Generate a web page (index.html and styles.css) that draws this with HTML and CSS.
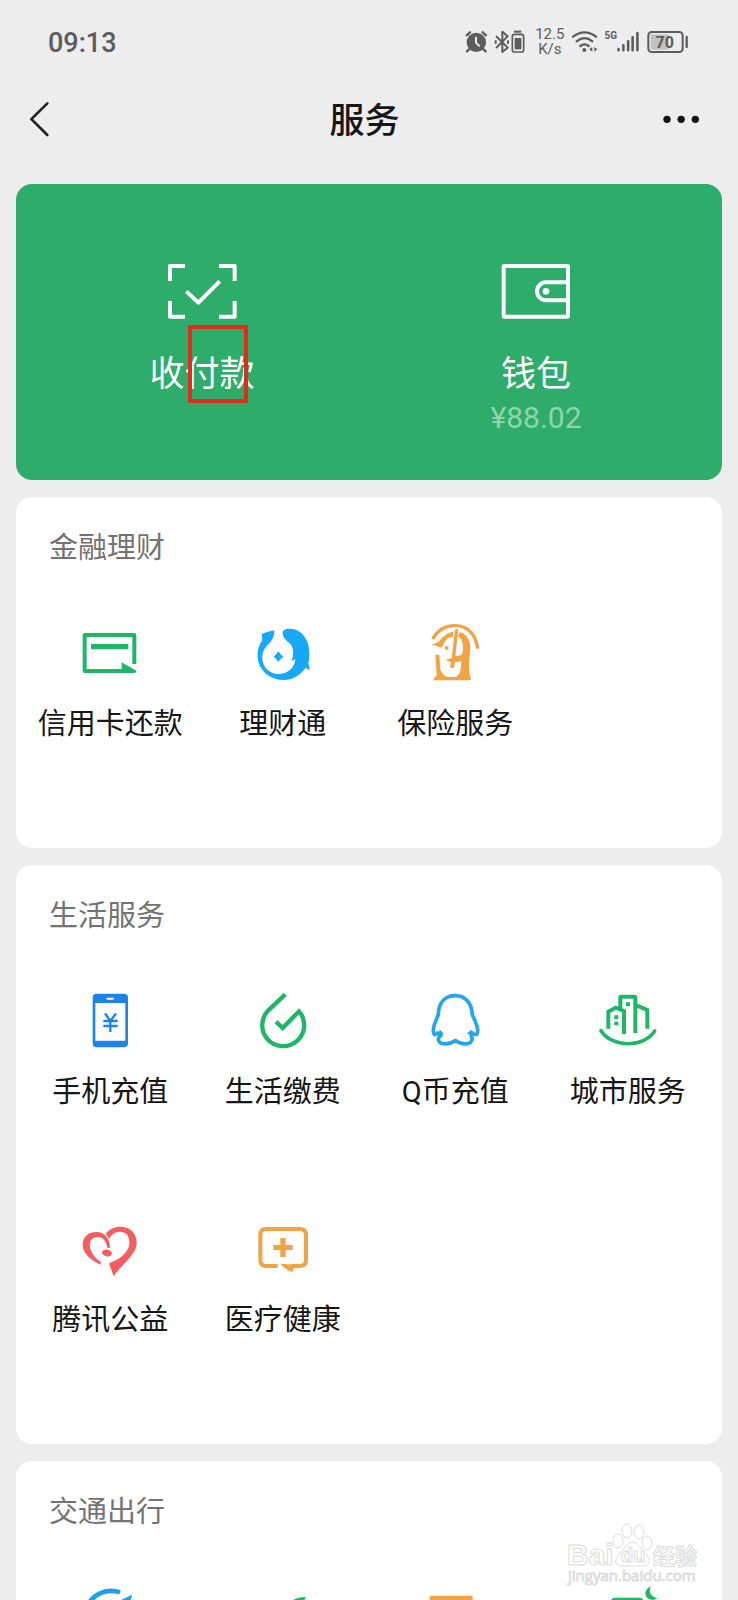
FILE: index.html
```html
<!DOCTYPE html>
<html lang="zh-CN">
<head>
<meta charset="utf-8">
<meta name="viewport" content="width=device-width, initial-scale=1">
<title>服务</title>
<link rel="stylesheet" href="styles.css">
</head>
<body>
<div class="screen">
  <div class="status">
    <time class="clock">09:13</time>
    <div class="indicators">
      <svg class="alarm" viewBox="76 60 69 72" aria-hidden="true">
        <path d="M81 76l10-9M139 76l-10-9M88 118l-6 6M132 118l6 6" stroke="#5c5c5c" stroke-width="7" fill="none" stroke-linecap="round"/>
        <circle cx="110" cy="97" r="29" fill="#5c5c5c"/>
        <path d="M109 80v18l11 11" stroke="#ededed" stroke-width="6" fill="none"/>
      </svg>
      <svg class="bluetooth" viewBox="165 60 42 72" aria-hidden="true">
        <path d="M168 78l35 35-16 13V65l16 14-35 35M167 91v10M204 91v10" fill="none" stroke="#5c5c5c" stroke-width="6" stroke-linejoin="round"/>
      </svg>
      <svg class="device" viewBox="214 60 42 72" aria-hidden="true">
        <path d="M223 65h22" stroke="#5c5c5c" stroke-width="6"/>
        <rect x="218" y="73" width="34" height="53" rx="7" fill="none" stroke="#5c5c5c" stroke-width="5"/>
        <rect x="225" y="84" width="20" height="34" fill="#5c5c5c"/>
      </svg>
      <span class="speed">12.5<br>K/s</span>
      <svg class="wifi" viewBox="402 60 78 72" aria-hidden="true">
        <path d="M405 80q35-26 69 0M416 94q24-19 47 0M427 108q13-10 25 0" fill="none" stroke="#5c5c5c" stroke-width="7" stroke-linecap="round"/>
        <circle cx="439" cy="120" r="6" fill="#5c5c5c"/>
        <path d="M463 111v14l-9-7zM469 111v14l9-7z" fill="#5c5c5c"/>
      </svg>
      <span class="network">5G</span>
      <svg class="signal" viewBox="530 60 69 72" aria-hidden="true">
        <path d="M535 118v4M550 106v16M565 94v28M579 81v41M594 68v54" stroke="#5c5c5c" stroke-width="8" stroke-linecap="round"/>
      </svg>
      <svg class="battery" viewBox="622 60 126 72" aria-hidden="true">
        <rect x="633" y="73" width="54" height="46" fill="#c2c2c2"/>
        <rect x="626" y="66" width="103" height="60" rx="10" fill="none" stroke="#5c5c5c" stroke-width="6"/>
        <path d="M741 81v30" stroke="#5c5c5c" stroke-width="7" stroke-linecap="round"/>
        <text x="675" y="113" text-anchor="middle" class="charge">70</text>
      </svg>
    </div>
  </div>

  <header class="nav">
    <button class="nav-button" type="button" aria-label="返回">
      <svg class="back" viewBox="88 272 63 114"><path d="M143 279L95 326.500L143 374" fill="none" stroke="#222" stroke-width="8" stroke-linecap="round" stroke-linejoin="round"/></svg>
    </button>
    <h1 class="nav-title">服务</h1>
    <button class="nav-button nav-more" type="button" aria-label="更多">
      <svg class="more" viewBox="668 313 111 33"><g fill="#111"><circle cx="680" cy="326" r="11"/><circle cx="722.500" cy="326" r="11"/><circle cx="765" cy="326" r="11"/></g></svg>
    </button>
  </header>

  <main class="content">
    <section class="pay">
      <a class="pay-item" href="#pay">
        <svg class="pay-icon" viewBox="108 66 216 180" fill="none" stroke="#fff" stroke-width="12" stroke-linejoin="round" aria-hidden="true">
          <path d="M120 123V78h45M267 78h47v45M314 183v47h-47M165 230h-45v-47M169 154l36 34 64-64"/>
        </svg>
        <span class="pay-label">收付款<span class="marker"></span></span>
      </a>
      <a class="pay-item" href="#wallet">
        <svg class="pay-icon" viewBox="1110 66 216 180" fill="none" stroke="#fff" stroke-width="12" stroke-linejoin="round" aria-hidden="true">
          <rect x="1121" y="78" width="193" height="152" rx="2"/>
          <path d="M1314 127h-66a27 27 0 0 0 0 54h66"/>
          <circle cx="1248" cy="154" r="10" fill="#fff" stroke="none"/>
        </svg>
        <span class="pay-label">钱包</span>
        <span class="amount">¥88.02</span>
      </a>
    </section>

    <section class="card">
      <h2 class="card-title">金融理财</h2>
      <div class="grid">
        <a class="item" href="#credit">
          <svg class="icon" viewBox="60 72 180 180" aria-hidden="true">
            <path d="M223 192V106q0-1-1-1H75q-1 0-1 1v106q0 1 1 1h115" fill="none" stroke="#1fb668" stroke-width="12"/>
            <path d="M93 132h112v16H93zM185 187l44 25q0 7-7 7h-37z" fill="#1fb668"/>
          </svg>
          <span class="label">信用卡还款</span>
        </a>
        <a class="item" href="#licaitong">
          <svg class="icon" viewBox="578 72 180 180" fill="#17a8f8" aria-hidden="true">
            <path d="M642 91Q622 94 604 102Q604 112 606 120C592 139 588 166 595 188C604 219 635 239 670 240C696 240 718 228 735 204L749 210L744 190C750 165 748 135 735 114C725 96 708 86 686 86C671 86 666 93 667 101C668 113 680 123 690 132C699 142 699 156 698 166Q696 177 694 183L705 178C703 203 683 221 657 222C628 223 607 203 606 175C605 157 613 144 624 133C636 121 642 109 642 91Z"/>
            <path d="M654 154q6 9 15 16-9 6-15 15-6-9-14-15 8-7 14-16z"/>
          </svg>
          <span class="label">理财通</span>
        </a>
        <a class="item" href="#insurance">
          <svg class="icon" viewBox="1096 72 180 180" aria-hidden="true">
            <path d="M1119 117C1134 90 1159 76 1187 77C1224 77 1249 103 1254 146" fill="none" stroke="#f2a344" stroke-width="10"/>
            <path d="M1116 134Q1136 128 1142 119Q1156 102 1182 94L1179 111C1164 111 1156 120 1153 132L1145 143Q1132 137 1116 134Z" fill="#f2a344"/>
            <path d="M1202 96C1224 103 1236 127 1231 158C1227 188 1226 211 1234 236Q1234 241 1228 241H1120L1131 225L1127 164H1139L1142 208Q1149 227 1163 231H1188Q1201 226 1203 205L1205 184L1186 187L1183 203H1171L1174 186L1158 181L1176 174L1186 88L1196 88L1187 168Q1201 169 1208 161Q1213 138 1206 121Q1202 112 1194 108Z" fill="#f2a344"/>
            <circle cx="1161" cy="144" r="6" fill="#f2a344"/>
          </svg>
          <span class="label">保险服务</span>
        </a>
      </div>
    </section>

    <section class="card">
      <h2 class="card-title">生活服务</h2>
      <div class="grid">
        <a class="item" href="#topup">
          <svg class="icon" viewBox="61 66 180 180" aria-hidden="true">
            <path fill-rule="evenodd" d="M111 71h82q12 0 12 12v137q0 12-12 12h-82q-12 0-12-12V83q0-12 12-12zm-4 28v113h90V99zM141 83v6h21v-6z" fill="#1e82e6"/>
            <path d="M136 130l16 23 17-23M131 153h43M131 168h43M152 153v33" fill="none" stroke="#1e82e6" stroke-width="7"/>
          </svg>
          <span class="label">手机充值</span>
        </a>
        <a class="item" href="#bills">
          <svg class="icon" viewBox="578 66 180 180" aria-hidden="true">
            <path d="M675 73L624 121A63 63 0 1 0 716 124L667 174L647 155" fill="none" stroke="#1fb668" stroke-width="13"/>
          </svg>
          <span class="label">生活缴费</span>
        </a>
        <a class="item" href="#qcoin">
          <svg class="icon" viewBox="75 66 180 180" aria-hidden="true">
            <path d="M113 189Q99 202 100 179C101 163 110 147 115 134C116 99 134 77 166 77C198 77 215 101 217 134C222 147 232 164 233 181Q232 202 218 189Q210 196 217 205C215 227 184 225 166 211C148 225 117 226 115 208Q115 201 123 196Q116 191 113 189Z" fill="none" stroke="#23a5ef" stroke-width="11" stroke-linejoin="round"/>
            <path d="M119 178l12 13-15 5zM214 178l-13 13 16 5z" fill="#23a5ef"/>
          </svg>
          <span class="label">Q币充值</span>
        </a>
        <a class="item" href="#city">
          <svg class="icon" viewBox="593 66 180 180" aria-hidden="true">
            <path d="M624 176V125L646 113L671 123V192M660 115V83q0-3 3-3h39q3 0 3 3V189M710 107L741 120V176" fill="none" stroke="#1fb668" stroke-width="12"/>
            <path d="M677 97h12v12h-12zM642 136h12v11h-12zM642 155h12v11h-12z" fill="#1fb668"/>
            <path d="M602 182C635 234 730 234 763 183" fill="none" stroke="#1fb668" stroke-width="11" stroke-linecap="round"/>
          </svg>
          <span class="label">城市服务</span>
        </a>
        <a class="item" href="#charity">
          <svg class="icon" viewBox="121 60 180 180" fill="#f55d60" aria-hidden="true">
            <path d="M183 194C152 181 128 159 129 133C130 109 147 96 170 96C195 96 211 114 211 144L203 143C199 121 188 110 174 111C158 112 149 122 151 140C153 157 166 174 183 185Z"/>
            <path d="M198 101C210 87 224 80 241 80C273 80 292 101 291 131C289 165 247 191 222 229L208 190C236 180 266 160 269 133C271 108 259 95 241 95C225 95 213 105 208 118Q205 106 198 101Z"/>
            <ellipse cx="202" cy="159" rx="15" ry="10" transform="rotate(10 202 159)"/>
          </svg>
          <span class="label">腾讯公益</span>
        </a>
        <a class="item" href="#health">
          <svg class="icon" viewBox="638 60 180 180" aria-hidden="true">
            <path d="M712 198H678Q660 198 660 180V105Q660 87 678 87H779Q797 87 797 105V180Q797 198 779 198H752" fill="none" stroke="#f2a344" stroke-width="12"/>
            <path d="M719 191l46 3-9 22q-21-7-37-25zM720 114h16v21h21v15h-21v21h-16v-21h-21v-15h21z" fill="#f2a344"/>
          </svg>
          <span class="label">医疗健康</span>
        </a>
      </div>
    </section>

    <section class="card">
      <h2 class="card-title">交通出行</h2>
      <div class="grid">
        <a class="item" href="#travel">
          <svg class="icon" viewBox="241 444 180 180" aria-hidden="true">
            <path d="M361 457C320 444 279 462 262 500A77 77 0 0 0 400 560" fill="none" stroke="#1e9fe8" stroke-width="14"/>
            <path d="M398 464L368 478L310 540L380 520Z" fill="#1e9fe8"/>
          </svg>
        </a>
        <a class="item" href="#train">
          <svg class="icon" viewBox="758 444 180 180" aria-hidden="true">
            <path d="M916 471Q880 471 868 492L848 479L843 483Q862 500 862 530Q900 515 916 471Z" fill="#1fb668"/>
          </svg>
        </a>
        <a class="item" href="#taxi">
          <svg class="icon" viewBox="136 444 180 180" aria-hidden="true">
            <path d="M155 467h119q5 0 5 5v130H150V472q0-5 5-5z" fill="#f2a344"/>
          </svg>
        </a>
        <a class="item" href="#hotel">
          <svg class="icon" viewBox="653 444 180 180" fill="#1fb668" aria-hidden="true">
            <path d="M704 473h74q12 0 12 12v110h-98V485q0-12 12-12z"/>
            <path d="M812 439C803 455 811 470 831 475C814 486 795 476 795 459Q797 445 812 439Z"/>
          </svg>
        </a>
      </div>
    </section>
  </main>

  <div class="watermark">
    <svg class="watermark-art" viewBox="0 0 140 66" role="img" aria-label="Baidu 经验">
      <g fill="#fff" stroke="#dcdcdc" stroke-width="1">
        <ellipse cx="53" cy="23" rx="5" ry="7"/>
        <ellipse cx="62" cy="13" rx="5" ry="7"/>
        <ellipse cx="74" cy="14" rx="5" ry="7"/>
        <ellipse cx="82" cy="25" rx="5" ry="7"/>
        <path d="M51 41Q53 36 58 32Q67 16 77 32L82 37Q88 47 79 48H57Q49 47 51 41Z"/>
        <text class="mark-bai" x="2" y="47">Bai</text>
        <text class="mark-du" x="56" y="44">du</text>
        <text class="mark-cn" x="88" y="46">经验</text>
        <text class="mark-url" x="3" y="63">jingyan.baidu.com</text>
      </g>
    </svg>
  </div>
</div>
</body>
</html>
```
FILE: styles.css
```css
* {
  box-sizing: border-box;
}

body {
  margin: 0;
  background: #ededed;
  color: #161616;
  font-family: Roboto, "Noto Sans CJK SC", sans-serif;
}

a {
  color: inherit;
  text-decoration: none;
}

svg {
  display: block;
  overflow: visible;
  flex: none;
}

.screen {
  position: relative;
  height: 100vh;
  overflow: hidden;
}

.status {
  display: flex;
  align-items: center;
  justify-content: space-between;
  height: 84px;
  padding: 0 49px 0 48px;
  color: #5c5c5c;
}

.clock {
  padding-top: 2px;
  font-size: 27px;
  font-weight: 500;
}

.indicators {
  display: flex;
  align-items: center;
}

.indicators svg {
  height: 24px;
}

.alarm {
  width: 23px;
  margin-right: 7px;
}

.bluetooth {
  width: 14px;
  margin-right: 2px;
}

.device {
  width: 14px;
  margin-right: 10px;
}

.speed {
  margin-right: 8px;
  font-size: 15px;
  line-height: 15px;
  text-align: center;
}

.wifi {
  width: 26px;
  margin-right: 6px;
}

.network {
  align-self: flex-start;
  padding-top: 3px;
  font-size: 10px;
  font-weight: 700;
  line-height: 12px;
}

.signal {
  width: 22px;
  margin-right: 8px;
}

.battery {
  width: 42px;
}

.charge {
  fill: #5c5c5c;
  font-size: 48px;
  font-weight: 700;
}

.nav {
  display: grid;
  grid-template-columns: 1fr auto 1fr;
  align-items: center;
  height: 72px;
  padding: 0 38px 0 29px;
}

.nav-button {
  display: flex;
  justify-self: start;
  padding: 0;
  border: 0;
  background: none;
}

.nav-more {
  justify-self: end;
}

.back {
  width: 21px;
  height: 38px;
}

.more {
  width: 37px;
  height: 11px;
}

.nav-title {
  margin: 0;
  padding-top: 4px;
  font-size: 35px;
  font-weight: 500;
  line-height: 48px;
}

.content {
  display: flex;
  flex-direction: column;
  gap: 17px;
  padding: 28px 16px 0;
}

.pay {
  display: grid;
  grid-template-columns: 1fr 1fr;
  padding: 78px 19px 44px;
  border-radius: 16px;
  background: #2eac69;
  color: #fff;
}

.pay-item {
  display: flex;
  flex-direction: column;
  align-items: center;
}

.pay-icon {
  width: 72px;
  height: 60px;
  margin-bottom: 31px;
}

.pay-label {
  position: relative;
  margin-bottom: 3px;
  font-size: 35px;
  line-height: 44px;
}

.marker {
  position: absolute;
  top: -28px;
  right: 7px;
  width: 60px;
  height: 78px;
  border: 4px solid #e5291a;
  border-radius: 2px;
}

.amount {
  color: #8fd5ae;
  font-size: 30px;
  line-height: 36px;
}

.card {
  padding: 31px 8px 0;
  border-radius: 16px;
  background: #fff;
}

.card-title {
  margin: 0 0 52px;
  padding-left: 25px;
  color: #737373;
  font-size: 29px;
  font-weight: 400;
  line-height: 40px;
}

.grid {
  display: grid;
  grid-template-columns: repeat(4, 1fr);
  grid-auto-rows: 228px;
}

.item {
  display: flex;
  flex-direction: column;
  align-items: center;
  padding-top: 4px;
}

.icon {
  width: 60px;
  height: 60px;
  margin-bottom: 20px;
}

.label {
  font-size: 29px;
  line-height: 40px;
  white-space: nowrap;
}

.watermark {
  position: absolute;
  right: 33px;
  bottom: 16px;
}

.watermark-art {
  width: 140px;
  height: 66px;
}

.mark-bai {
  font: 700 30px "Liberation Sans", sans-serif;
}

.mark-du {
  font: 700 20px "Liberation Sans", sans-serif;
}

.mark-cn {
  font: 700 22px "Noto Sans CJK SC", sans-serif;
}

.mark-url {
  font: 400 15px "Open Sans", sans-serif;
}
```
